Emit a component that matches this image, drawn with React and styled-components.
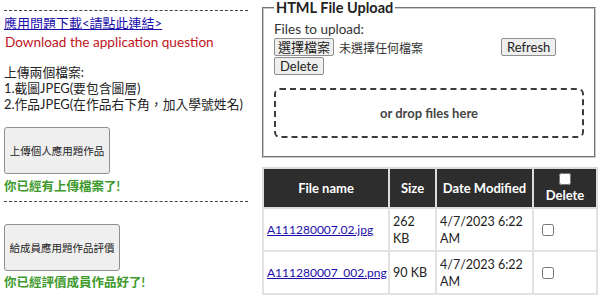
import React from 'react';
import styled, { createGlobalStyle } from 'styled-components';

const GlobalStyle = createGlobalStyle`
  html, body {
    margin: 0;
    padding: 0;
    background: #ffffff;
  }
  body {
    font-family: Lato, "Noto Sans CJK TC", sans-serif;
    color: #222;
  }
`;

const sans = `Lato, "Noto Sans CJK TC", sans-serif`;

const Page = styled.div`
  display: flex;
  align-items: flex-start;
  gap: 14px;
  padding: 0 4px;
  width: 600px;
  box-sizing: border-box;
`;

const LeftColumn = styled.div`
  width: 244px;
  flex-shrink: 0;
  display: flex;
  flex-direction: column;
  font-family: ${sans};
  font-size: 13px;
`;

const Divider = styled.hr`
  border: none;
  border-top: 1px dashed #444;
  height: 0;
  width: 100%;
  margin: ${(p) => p.$m || '10px 0 4px'};
`;

const QuestionLink = styled.a`
  color: #1a0dab;
  text-decoration: underline;
  font-size: 13px;
  line-height: 16px;
`;

const RedNote = styled.div`
  color: #c0141b;
  font-size: 13.6px;
  line-height: 20px;
  margin-top: 1px;
  padding-left: 1px;
`;

const InfoBlock = styled.div`
  margin-top: 12px;
  font-size: 12.8px;
  line-height: 16px;
  color: #222;
`;

const TallButton = styled.button`
  width: ${(p) => p.$w}px;
  height: 47px;
  margin-top: ${(p) => p.$mt}px;
  background: #efefef;
  border: 1px solid #8f8f8f;
  border-radius: 3px;
  font-family: ${sans};
  font-size: 10.5px;
  color: #222;
  padding: 0;
`;

const Success = styled.div`
  color: #3e9a2c;
  font-weight: bold;
  font-size: 12.5px;
  line-height: 16px;
  margin-top: ${(p) => p.$mt || 3}px;
`;

const RightColumn = styled.div`
  width: 334px;
  flex-shrink: 0;
  display: flex;
  flex-direction: column;
  gap: 9px;
`;

const Fieldset = styled.fieldset`
  margin: 0;
  width: 330px;
  height: 158px;
  box-sizing: border-box;
  border: 2px groove #c8c8c8;
  padding: 0 10px 8px;
`;

const Legend = styled.legend`
  font-weight: bold;
  font-size: 14.5px;
  line-height: 15px;
  padding: 0 2px;
  color: #222;
`;

const Label = styled.div`
  font-size: 13.5px;
  line-height: 16px;
  color: #333;
  margin-top: 6px;
`;

const FileRow = styled.div`
  display: flex;
  align-items: center;
  margin-top: 1px;
`;

const PlainButton = styled.button`
  height: 18px;
  padding: 0 ${(p) => p.$px || 5}px;
  background: #efefef;
  border: 1px solid #8f8f8f;
  border-radius: 2px;
  font-family: ${sans};
  font-size: 13px;
  color: #222;
  line-height: 14px;
`;

const FileStatus = styled.span`
  width: 162px;
  margin-left: 5px;
  font-size: 12px;
  color: #333;
`;

const DropZone = styled.div`
  margin-top: 13px;
  height: 50px;
  border: 2px dashed #3c3c3c;
  border-radius: 6px;
  display: flex;
  align-items: center;
  justify-content: center;
  font-weight: bold;
  font-size: 13px;
  color: #444;
  width: 310px;
  box-sizing: border-box;
`;

const Table = styled.table`
  border-collapse: collapse;
  table-layout: fixed;
  width: 334px;
  font-size: 12.5px;
`;

const Th = styled.th`
  box-sizing: border-box;
  background: #2d2d2d;
  color: #fff;
  font-weight: bold;
  font-size: 13px;
  border: 2px solid #dcdcdc;
  height: 40px;
  padding: 2px 3px;
  width: ${(p) => p.$w}px;
`;

const Td = styled.td`
  border: 2px solid #e2e2e2;
  padding: 2px 3px;
  height: 37px;
  color: #222;
  line-height: 17px;
  vertical-align: middle;
  white-space: ${(p) => (p.$nowrap ? 'nowrap' : 'normal')};
`;

const FileLink = styled.a`
  color: #1a0dab;
  text-decoration: underline;
  font-size: 12px;
`;

const Check = styled.input`
  width: 12px;
  height: 12px;
  margin: ${(p) => p.$m || '0 0 0 5px'};
  display: block;
`;

const files = [
  { name: 'A111280007.02.jpg', size: '262 KB', date: '4/7/2023 6:22 AM' },
  { name: 'A111280007_002.png', size: '90 KB', date: '4/7/2023 6:22 AM' },
];

export default function App() {
  return (
    <>
      <GlobalStyle />
      <Page>
        <LeftColumn>
          <Divider />
          <QuestionLink href="#">應用問題下載&lt;請點此連結&gt;</QuestionLink>
          <RedNote>Download the application question</RedNote>
          <InfoBlock>
            上傳兩個檔案:
            <br />
            1.截圖JPEG(要包含圖層)
            <br />
            2.作品JPEG(在作品右下角，加入學號姓名)
          </InfoBlock>
          <TallButton $w={106} $mt={15}>上傳個人應用題作品</TallButton>
          <Success $mt={5}>你已經有上傳檔案了!</Success>
          <Divider $m="6px 0 0" />
          <TallButton $w={116} $mt={22}>給成員應用題作品評價</TallButton>
          <Success $mt={4}>你已經評價成員作品好了!</Success>
        </LeftColumn>

        <RightColumn>
          <Fieldset>
            <Legend>HTML File Upload</Legend>
            <Label>Files to upload:</Label>
            <FileRow>
              <PlainButton $px={3}>選擇檔案</PlainButton>
              <FileStatus>未選擇任何檔案</FileStatus>
              <PlainButton>Refresh</PlainButton>
            </FileRow>
            <FileRow>
              <PlainButton>Delete</PlainButton>
            </FileRow>
            <DropZone>or drop files here</DropZone>
          </Fieldset>

          <Table>
            <thead>
              <tr>
                <Th $w={126}>File name</Th>
                <Th $w={47}>Size</Th>
                <Th $w={97}>Date Modified</Th>
                <Th $w={64}>
                  <Check type="checkbox" $m="0 auto 2px" />
                  Delete
                </Th>
              </tr>
            </thead>
            <tbody>
              {files.map((f) => (
                <tr key={f.name}>
                  <Td $nowrap>
                    <FileLink href="#">{f.name}</FileLink>
                  </Td>
                  <Td>{f.size}</Td>
                  <Td>{f.date}</Td>
                  <Td>
                    <Check type="checkbox" />
                  </Td>
                </tr>
              ))}
            </tbody>
          </Table>
        </RightColumn>
      </Page>
    </>
  );
}
